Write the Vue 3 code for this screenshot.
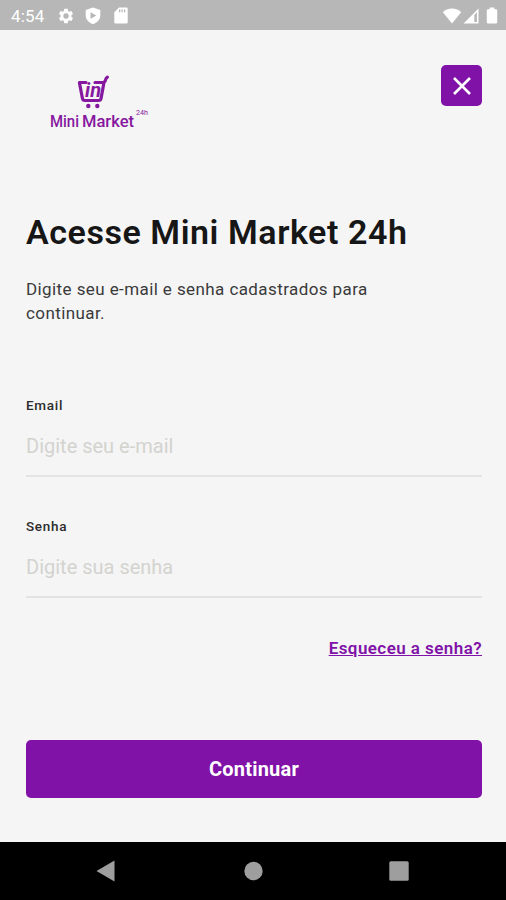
<script setup>
    import { ref } from 'vue'

    const email = ref('')
    const senha = ref('')
</script>

<template>
    <div class="screen">
        <header class="statusbar">
            <span class="clock">4:54</span>
            <svg class="gear" viewBox="0 0 24 24"><path d="M19.14 12.94c.04-.3.06-.61.06-.94s-.02-.64-.07-.94l2.03-1.58a.49.49 0 0 0 .12-.61l-1.92-3.32a.49.49 0 0 0-.59-.22l-2.39.96a7 7 0 0 0-1.62-.94l-.36-2.54A.48.48 0 0 0 13.92 2.4h-3.84a.47.47 0 0 0-.47.41l-.36 2.54c-.59.24-1.13.57-1.62.94l-2.39-.96a.48.48 0 0 0-.59.22L2.74 8.87a.47.47 0 0 0 .12.61l2.03 1.58a6 6 0 0 0 0 1.88l-2.03 1.58a.49.49 0 0 0-.12.61l1.92 3.32c.12.22.37.29.59.22l2.39-.96c.5.38 1.03.7 1.62.94l.36 2.54c.05.24.24.41.48.41h3.84c.24 0 .44-.17.47-.41l.36-2.54c.59-.24 1.13-.56 1.62-.94l2.39.96c.22.08.47 0 .59-.22l1.92-3.32a.47.47 0 0 0-.12-.61zM12 15.6a3.6 3.6 0 1 1 0-7.2 3.6 3.6 0 0 1 0 7.2z"/></svg>
            <svg class="shield" viewBox="0 0 16 18"><path fill-rule="evenodd" d="M8 .5 15.3 3v5.5c0 4-3 7.2-7.3 8.8C3.7 15.7.7 12.5.7 8.5V3zM5.5 5.2v6.6L11.3 8.5z"/></svg>
            <svg class="sdcard" viewBox="0 0 14 17"><path fill-rule="evenodd" d="M5 .5h7.5a1.2 1.2 0 0 1 1.2 1.2v13.6a1.2 1.2 0 0 1-1.2 1.2h-11a1.2 1.2 0 0 1-1.2-1.2V5.3zM5 2.5v2.7h1.3V2.5zm2.5 0v2.7h1.3V2.5zm2.5 0v2.7h1.3V2.5z"/></svg>
            <span class="fill"></span>
            <svg class="wifi" viewBox="0 0 20 16"><path d="M10 15.5.8 4.2C3.2 1.9 6.4.6 10 .6s6.8 1.3 9.2 3.6z"/></svg>
            <svg class="signal" viewBox="0 0 16 16"><path fill-rule="evenodd" d="M15.5.5v15H.5zM13.9 4.3 11.3 7v7h2.6z"/></svg>
            <svg class="battery" viewBox="0 0 12 17"><path d="M3.7.5h4.6v1.8h1.7a1.2 1.2 0 0 1 1.2 1.2v11.8a1.2 1.2 0 0 1-1.2 1.2H2a1.2 1.2 0 0 1-1.2-1.2V3.5A1.2 1.2 0 0 1 2 2.3h1.7z"/></svg>
        </header>

        <main class="content">
            <div class="top">
                <svg class="logo" viewBox="0 0 102 60">
                    <path class="cart" d="M38 10.5h-6.6l3 15.8q.4 2.2 2.5 2.2h13.6q2.2 0 2.6-2.2l2.6-14.3M47 10.5h7.5q2.5 0 2.9-2.3.4-2 2-3"/>
                    <circle cx="40.3" cy="34" r="2.2"/>
                    <circle cx="49.3" cy="34" r="2.2"/>
                    <text class="mark" x="37" y="24.5" textLength="16" lengthAdjust="spacingAndGlyphs">in</text>
                    <text class="name" x="2" y="55" textLength="29" lengthAdjust="spacingAndGlyphs">Mini</text>
                    <text class="name" x="34" y="55" textLength="52" lengthAdjust="spacingAndGlyphs">Market</text>
                    <text class="hours" x="88" y="43" textLength="12" lengthAdjust="spacingAndGlyphs">24h</text>
                </svg>
                <button class="close" aria-label="Fechar">
                    <svg viewBox="0 0 20 20"><path d="M2 2l16 16M18 2L2 18"/></svg>
                </button>
            </div>

            <h1>Acesse Mini Market 24h</h1>
            <p class="intro">Digite seu e-mail e senha cadastrados para continuar.</p>

            <label class="field">
                <span>Email</span>
                <input v-model="email" type="email" placeholder="Digite seu e-mail">
            </label>
            <label class="field">
                <span>Senha</span>
                <input v-model="senha" type="password" placeholder="Digite sua senha">
            </label>

            <a class="forgot" href="#">Esqueceu a senha?</a>
            <button class="submit">Continuar</button>
        </main>

        <nav class="navbar">
            <svg viewBox="0 0 22 22"><path d="M18.5.5v21L.5 11z"/></svg>
            <svg viewBox="0 0 22 22"><circle cx="11.5" cy="11" r="9.2"/></svg>
            <svg viewBox="0 0 22 22"><rect x="1.3" y="1.3" width="19.4" height="19.4" rx="1.5"/></svg>
        </nav>
    </div>
</template>

<style>
    body{
        margin: 0;
    }
</style>

<style scoped>
    .screen{
        display: flex;
        flex-direction: column;
        box-sizing: border-box;
        width: 506px;
        height: 900px;
        overflow: hidden;
        background: #f5f5f5;
        font-family: Roboto, "Liberation Sans", sans-serif;
        color: #161616;
    }
    .statusbar{
        display: flex;
        align-items: center;
        flex: none;
        box-sizing: border-box;
        height: 30px;
        padding: 1px 8px 0 11px;
        background: #b7b7b7;
        color: #fff;
    }
    .statusbar svg{
        fill: #fff;
    }
    .clock{
        width: 46px;
        font-size: 17px;
        letter-spacing: 0.2px;
    }
    .gear{
        width: 18px;
        height: 18px;
    }
    .shield{
        width: 16px;
        height: 18px;
        margin-left: 10px;
    }
    .sdcard{
        width: 14px;
        height: 17px;
        margin-left: 13px;
    }
    .fill{
        flex: 1;
    }
    .wifi{
        width: 20px;
        height: 16px;
    }
    .signal{
        width: 16px;
        height: 16px;
        margin-left: 1px;
    }
    .battery{
        width: 12px;
        height: 17px;
        margin-left: 7px;
    }
    .content{
        display: flex;
        flex-direction: column;
        flex: 1;
        padding: 35px 24px 0 26px;
    }
    .top{
        display: flex;
        justify-content: space-between;
        align-items: flex-start;
        height: 147px;
    }
    .logo{
        width: 102px;
        height: 60px;
        margin: 7px 0 0 22px;
        fill: #8618a0;
    }
    .cart{
        fill: none;
        stroke: #8618a0;
        stroke-width: 3.2;
        stroke-linecap: round;
        stroke-linejoin: round;
    }
    .mark{
        font-size: 20px;
        font-weight: 700;
        font-style: italic;
    }
    .name{
        font-size: 17px;
        font-weight: 500;
    }
    .hours{
        font-size: 7px;
    }
    button{
        border: 0;
        background: #8012a8;
        color: #fff;
        font-family: inherit;
    }
    .close{
        display: flex;
        align-items: center;
        justify-content: center;
        width: 41px;
        height: 41px;
        padding: 0;
        border-radius: 5px;
    }
    .close svg{
        width: 20px;
        height: 20px;
        fill: none;
        stroke: #fff;
        stroke-width: 2.6;
    }
    h1{
        margin: 0;
        font-size: 34px;
        line-height: 40px;
        font-weight: 600;
        letter-spacing: 0.56px;
        white-space: nowrap;
    }
    .intro{
        width: 370px;
        margin: 25px 0 72px;
        font-size: 17px;
        line-height: 24px;
        letter-spacing: 0.41px;
        color: #3a3a3a;
    }
    .field{
        display: flex;
        flex-direction: column;
        height: 78px;
        margin-bottom: 41px;
        border-bottom: 2px solid #e3e3e3;
    }
    .field span{
        font-size: 13.5px;
        line-height: 17px;
        font-weight: 500;
        letter-spacing: 0.7px;
        color: #2c2c2c;
    }
    .field input{
        margin-top: 17px;
        padding: 0;
        height: 30px;
        border: 0;
        outline: none;
        background: none;
        font-family: inherit;
        font-size: 20px;
        letter-spacing: 0;
        color: #161616;
    }
    .field input::placeholder{
        color: #d3d3cf;
    }
    .forgot{
        align-self: flex-end;
        margin-top: -2px;
        font-size: 17px;
        line-height: 22px;
        font-weight: 600;
        letter-spacing: 0.43px;
        color: #8012a8;
    }
    .submit{
        height: 58px;
        margin-top: 81px;
        border-radius: 5px;
        font-size: 20px;
        font-weight: 700;
        letter-spacing: 0.2px;
    }
    .navbar{
        display: flex;
        justify-content: center;
        align-items: center;
        flex: none;
        box-sizing: border-box;
        height: 58px;
        gap: 124px;
        background: #000;
    }
    .navbar svg{
        width: 22px;
        height: 22px;
        fill: #9e9e9e;
    }
</style>
